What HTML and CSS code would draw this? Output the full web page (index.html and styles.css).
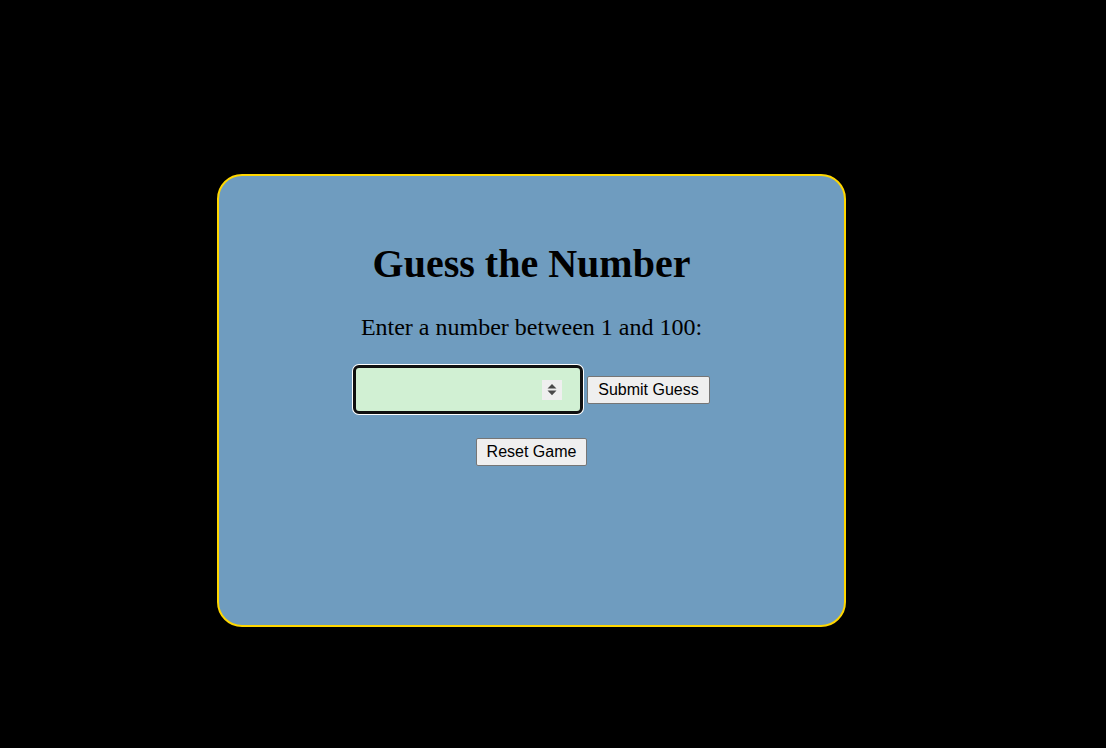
FILE: index.html
```html
<!DOCTYPE html>
<html lang="en">
<head>
<meta charset="utf-8">
<title>Guess the Number</title>
<link rel="stylesheet" href="styles.css">
</head>
<body>
<div class="card">
  <h1 class="title">Guess the Number</h1>
  <p class="prompt">Enter a number between 1 and 100:</p>
  <div class="row">
    <div class="field">
      <input class="guess" type="text" aria-label="Your guess">
      <span class="spin" aria-hidden="true">
        <svg width="20" height="20" viewBox="0 0 20 20"><path d="M10 4 L14.5 8.6 L5.5 8.6 Z M5.5 10.6 L14.5 10.6 L10 15.2 Z" fill="#4a4a4a"/></svg>
      </span>
    </div>
    <button class="btn" type="button">Submit Guess</button>
  </div>
  <div class="reset-row">
    <button class="btn" type="button">Reset Game</button>
  </div>
</div>
</body>
</html>
```

FILE: styles.css
```css
html, body {
  margin: 0;
  padding: 0;
  background: #000;
}
body {
  height: 748px;
  font-family: "Liberation Serif", "Times New Roman", serif;
}
.card {
  box-sizing: border-box;
  width: 629px;
  height: 453px;
  margin: 174px 0 0 217px;
  border: 2px solid #ffd700;
  border-radius: 25px;
  background: #6f9cbf;
  text-align: center;
  display: flex;
  flex-direction: column;
  align-items: center;
}
.title {
  margin: 65px 0 0;
  font-size: 40px;
  line-height: 46px;
  font-weight: bold;
  color: #000;
}
.prompt {
  margin: 26px 0 0;
  font-size: 24px;
  line-height: 28px;
  color: #000;
}
.row {
  margin-top: 24px;
  display: flex;
  align-items: center;
  gap: 4px;
}
.field {
  position: relative;
  width: 230px;
  height: 49px;
}
.guess {
  box-sizing: border-box;
  width: 230px;
  height: 49px;
  margin: 0;
  padding: 0 10px;
  border: 3px solid #101010;
  border-radius: 6px;
  box-shadow: 0 0 0 1px #ffffff;
  background: #d1f0d3;
  outline: none;
  font-family: "Liberation Sans", Arial, sans-serif;
  font-size: 16px;
}
.spin {
  position: absolute;
  top: 15px;
  right: 21px;
  width: 20px;
  height: 20px;
  background: #efefef;
  display: block;
}
.spin svg {
  display: block;
}
.btn {
  box-sizing: border-box;
  height: 28px;
  margin: 0;
  padding: 4px 10px;
  border: 1px solid #767676;
  border-radius: 2px;
  background: #efefef;
  color: #000;
  font-family: "Liberation Sans", Arial, sans-serif;
  font-size: 16px;
  line-height: 18px;
}
.reset-row {
  margin-top: 24px;
}
.reset-row .btn {
  display: block;
}
```
